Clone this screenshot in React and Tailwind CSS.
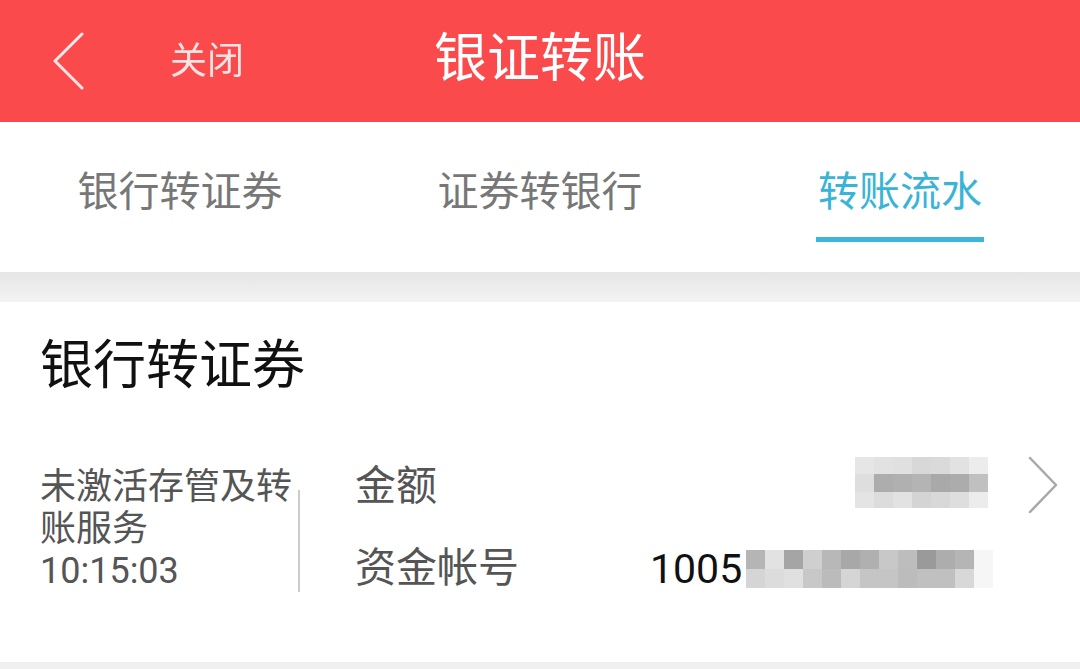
import React from "react";

const font = { fontFamily: 'Roboto, "Noto Sans CJK SC", sans-serif' };

const amountBlocks = [
  ["#e6e6e6", "#e2e2e2", "#e0e0e0", "#d8d8d8", "#dadada", "#e2e2e2", "#ececec"],
  ["#dedede", "#adadad", "#b0b0b0", "#b4b4b4", "#a9a9a9", "#acacac", "#c0c0c0"],
  ["#e4e4e4", "#dcdcdc", "#e2e2e2", "#d4d4d4", "#d8d8d8", "#dedede", "#ececec"],
];

const accountBlocks = [
  ["#b5b5b5", "#e2e2e2", "#a5a5a5", "#cfcfcf", "#b8b8b8", "#a8a8a8", "#b0b0b0", "#c8c8c8", "#bdbdbd", "#9a9a9a", "#adadad", "#b5b5b5", "#f6f6f6"],
  ["#d5d5d5", "#dcdcdc", "#e0e0e0", "#c8c8c8", "#bbbbbb", "#d5d5d5", "#c5c5c5", "#c5c5c5", "#bcbcbc", "#c0c0c0", "#c0c0c0", "#d8d8d8", "#f6f6f6"],
];

function Mosaic({ rows, cell = 19, heights }) {
  return (
    <div className="flex flex-col shrink-0">
      {rows.map((r, i) => (
        <div key={i} className="flex">
          {r.map((c, j) => (
            <div key={j} style={{ width: cell, height: heights[i], background: c }} />
          ))}
        </div>
      ))}
    </div>
  );
}

export default function App() {
  return (
    <div className="w-[1080px] h-[669px] overflow-hidden flex flex-col bg-[#f0f0f0]" style={font}>
      {/* header */}
      <div className="h-[122px] bg-[#fa4a4c] grid grid-cols-[1fr_auto_1fr] items-center text-white">
        <div className="flex items-center">
          <svg className="ml-[52px]" width="32" height="58" viewBox="0 0 32 58" fill="none">
            <polyline points="30,2 3,29 30,56" stroke="#fde8e8" strokeWidth="3" strokeLinecap="round" strokeLinejoin="round" />
          </svg>
          <span className="ml-[86px] text-[37px] leading-none blur-[0.6px] text-[#fbe3e3]">关闭</span>
        </div>
        <div className="text-[53px] leading-none mb-[4px]">银证转账</div>
        <div />
      </div>

      {/* tabs */}
      <div className="h-[150px] bg-white grid grid-cols-3">
        <div className="flex justify-center pt-[48px]">
          <span className="text-[41px] leading-[44px] text-[#777777]">银行转证券</span>
        </div>
        <div className="flex justify-center pt-[48px]">
          <span className="text-[41px] leading-[44px] text-[#777777]">证券转银行</span>
        </div>
        <div className="flex justify-center pt-[48px]">
          <div className="flex flex-col items-center">
            <span className="text-[41px] leading-[44px] text-[#3ab4d6]">转账流水</span>
            <div className="mt-[23px] h-[5px] w-[168px] bg-[#3cb6d8]" />
          </div>
        </div>
      </div>

      <div className="h-[30px] bg-gradient-to-b from-[#e6e6e6] to-[#f3f3f3]" />

      {/* record card */}
      <div className="h-[360px] bg-white pl-[40px]">
        <div className="mt-[38px] text-[53px] leading-none text-[#111111]">银行转证券</div>

        <div className="mt-[73px] flex">
          <div className="w-[258px] shrink-0 text-[36px] leading-[42px] text-[#555555]">
            <div>未激活存管及转</div>
            <div>账服务</div>
            <div>10:15:03</div>
          </div>
          <div className="w-[2px] shrink-0 h-[102px] mt-[24px] bg-[#cccccc]" />
          <div className="flex-1 min-w-0 pl-[55px]">
            <div className="h-[42px] flex items-center">
              <span className="w-[295px] shrink-0 text-[41px] text-[#555555]">金额</span>
              <div className="flex-1 flex justify-end mb-[10px]">
                <Mosaic rows={amountBlocks} heights={[17, 18, 16]} />
              </div>
              <svg className="ml-[40px] mr-[22px] mb-[4px] shrink-0" width="30" height="58" viewBox="0 0 30 58" fill="none">
                <polyline points="2,2 28,29 2,56" stroke="#a8a8a8" strokeWidth="2.5" strokeLinecap="round" strokeLinejoin="round" />
              </svg>
            </div>
            <div className="mt-[40px] h-[42px] flex items-center">
              <span className="w-[295px] shrink-0 text-[41px] text-[#555555]">资金帐号</span>
              <span className="text-[41px] leading-none text-[#111111]">1005</span>
              <div className="ml-[4px]">
                <Mosaic rows={accountBlocks} heights={[19, 19]} cell={19} />
              </div>
            </div>
          </div>
        </div>
      </div>
    </div>
  );
}
